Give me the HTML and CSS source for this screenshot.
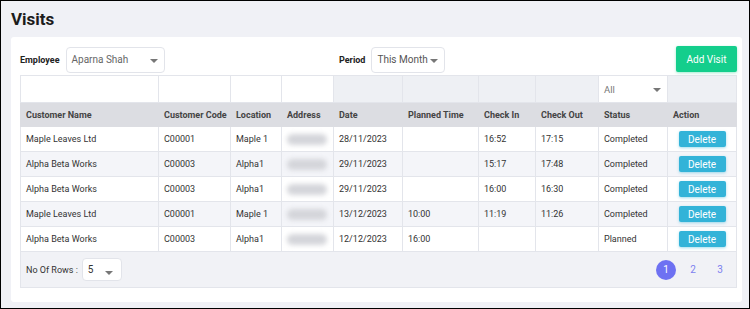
FILE: index.html
```html
<!DOCTYPE html>
<html lang="en">
<head>
    <meta charset="UTF-8">
    <meta name="viewport" content="width=device-width, initial-scale=1.0">
    <title>Visits</title>
    <link rel="stylesheet" href="styles.css">
</head>
<body>
    <div class="page">
        <h1 class="title">Visits</h1>
        <div class="card">
            <div class="toolbar">
                <div class="field">
                    <label>Employee</label>
                    <div class="select emp">Aparna Shah<span class="caret"></span></div>
                </div>
                <div class="field">
                    <label>Period</label>
                    <div class="select period">This Month<span class="caret"></span></div>
                </div>
                <button class="btn-add">Add Visit</button>
            </div>

            <table class="visits">
                <colgroup>
                    <col style="width:138px">
                    <col style="width:72px">
                    <col style="width:51px">
                    <col style="width:52px">
                    <col style="width:69px">
                    <col style="width:76px">
                    <col style="width:57px">
                    <col style="width:63px">
                    <col style="width:69px">
                    <col style="width:69px">
                </colgroup>
                <tr class="filters">
                    <td class="blank"></td>
                    <td class="blank"></td>
                    <td class="blank"></td>
                    <td class="blank"></td>
                    <td></td>
                    <td></td>
                    <td></td>
                    <td></td>
                    <td class="blank"><div class="filter-all">All<span class="caret"></span></div></td>
                    <td></td>
                </tr>
                <tr class="head">
                    <th>Customer Name</th>
                    <th>Customer Code</th>
                    <th>Location</th>
                    <th>Address</th>
                    <th>Date</th>
                    <th>Planned Time</th>
                    <th>Check In</th>
                    <th>Check Out</th>
                    <th>Status</th>
                    <th>Action</th>
                </tr>
                <tr class="row">
                    <td>Maple Leaves Ltd</td>
                    <td>C00001</td>
                    <td>Maple 1</td>
                    <td><span class="blur"></span></td>
                    <td>28/11/2023</td>
                    <td></td>
                    <td>16:52</td>
                    <td>17:15</td>
                    <td>Completed</td>
                    <td class="act"><button class="btn-del">Delete</button></td>
                </tr>
                <tr class="row alt">
                    <td>Alpha Beta Works</td>
                    <td>C00003</td>
                    <td>Alpha1</td>
                    <td><span class="blur"></span></td>
                    <td>29/11/2023</td>
                    <td></td>
                    <td>15:17</td>
                    <td>17:48</td>
                    <td>Completed</td>
                    <td class="act"><button class="btn-del">Delete</button></td>
                </tr>
                <tr class="row">
                    <td>Alpha Beta Works</td>
                    <td>C00003</td>
                    <td>Alpha1</td>
                    <td><span class="blur"></span></td>
                    <td>29/11/2023</td>
                    <td></td>
                    <td>16:00</td>
                    <td>16:30</td>
                    <td>Completed</td>
                    <td class="act"><button class="btn-del">Delete</button></td>
                </tr>
                <tr class="row alt">
                    <td>Maple Leaves Ltd</td>
                    <td>C00001</td>
                    <td>Maple 1</td>
                    <td><span class="blur"></span></td>
                    <td>13/12/2023</td>
                    <td>10:00</td>
                    <td>11:19</td>
                    <td>11:26</td>
                    <td>Completed</td>
                    <td class="act"><button class="btn-del">Delete</button></td>
                </tr>
                <tr class="row">
                    <td>Alpha Beta Works</td>
                    <td>C00003</td>
                    <td>Alpha1</td>
                    <td><span class="blur"></span></td>
                    <td>12/12/2023</td>
                    <td>16:00</td>
                    <td></td>
                    <td></td>
                    <td>Planned</td>
                    <td class="act"><button class="btn-del">Delete</button></td>
                </tr>
                <tr class="foot">
                    <td colspan="10">
                        <div class="foot-inner">
                            <div class="rows">
                                <span>No Of Rows :</span>
                                <div class="select num">5<span class="caret"></span></div>
                            </div>
                            <div class="pager">
                                <span class="pg on">1</span>
                                <span class="pg">2</span>
                                <span class="pg">3</span>
                            </div>
                        </div>
                    </td>
                </tr>
            </table>
        </div>
    </div>
</body>
</html>
```

FILE: styles.css
```css
* {
    margin: 0;
    box-sizing: border-box;
}

html, body {
    height: 100%;
}

body {
    background-color: #f0f1f6;
    border: 1px solid #000;
    font-family: Roboto, "Liberation Sans", Arial, sans-serif;
    color: #333;
    overflow: hidden;
}

.page {
    padding: 0 7px 0 10px;
}

.title {
    font-size: 17px;
    font-weight: 700;
    color: #1c1c1c;
    height: 36px;
    padding-top: 8px;
    line-height: 20px;
}

.card {
    background-color: #fff;
    border-radius: 3px;
    padding: 8px 5px 14px 9px;
}

.toolbar {
    display: grid;
    grid-template-columns: 319px 1fr auto;
    align-items: center;
    height: 27px;
    margin-bottom: 3px;
}

.field {
    display: flex;
    align-items: center;
    padding-top: 2px;
}

.field label {
    font-size: 9px;
    font-weight: 700;
    color: #222;
    margin-right: 6px;
}

.select {
    position: relative;
    height: 26px;
    border: 1px solid #e2e4ea;
    border-radius: 4px;
    background-color: #fff;
    font-size: 10px;
    color: #666;
    line-height: 24px;
    padding-left: 5px;
}

.emp {
    width: 99px;
}

.period {
    width: 74px;
    color: #555;
}

.caret {
    position: absolute;
    right: 6px;
    top: 11px;
    border-left: 4px solid transparent;
    border-right: 4px solid transparent;
    border-top: 4px solid #777;
}

.btn-add {
    width: 61px;
    height: 26px;
    border: none;
    border-radius: 2px;
    background-color: #14ce8c;
    color: #fff;
    font-family: inherit;
    font-size: 10px;
    box-shadow: 0 1px 3px rgba(20, 206, 140, 0.4);
}

.visits {
    width: 716px;
    border-collapse: collapse;
    table-layout: fixed;
    font-size: 9px;
}

.visits td, .visits th {
    border: 1px solid #e3e5eb;
    padding: 0 5px;
    text-align: left;
    white-space: nowrap;
    overflow: hidden;
}

.filters td {
    height: 27px;
    background-color: #eef0f4;
}

.filters td.blank {
    background-color: #fff;
}

.filter-all {
    position: relative;
    height: 25px;
    line-height: 25px;
    font-size: 9.5px;
    color: #777;
}

.filter-all .caret {
    right: 1px;
    top: 11px;
}

.head th {
    height: 24px;
    background-color: #dcdde2;
    font-weight: 700;
    color: #444;
    border-color: #dcdde2;
}

.row td {
    height: 25px;
    background-color: #fff;
}

.row.alt td {
    background-color: #f4f5f9;
}

.blur {
    display: block;
    width: 40px;
    height: 11px;
    border-radius: 6px;
    background-color: #d4d5da;
    filter: blur(2.5px);
}

.visits .act {
    text-align: center;
}

.btn-del {
    width: 47px;
    height: 16px;
    border: none;
    border-radius: 2px;
    background-color: #33b3d8;
    color: #fff;
    font-family: inherit;
    font-size: 10px;
    box-shadow: 0 1px 3px rgba(51, 179, 216, 0.45);
}

.visits .foot td {
    height: 36px;
    background-color: #f1f2f6;
    padding: 0 6px 0 5px;
}

.foot-inner {
    display: flex;
    justify-content: space-between;
    align-items: center;
}

.rows {
    display: flex;
    align-items: center;
    font-size: 9px;
    color: #333;
}

.num {
    width: 40px;
    height: 23px;
    line-height: 21px;
    margin-left: 4px;
    color: #333;
    font-size: 10px;
}

.num .caret {
    top: 12px;
    right: 8px;
}

.pager {
    display: flex;
    align-items: center;
    gap: 7px;
}

.pg {
    width: 20px;
    height: 20px;
    border-radius: 50%;
    display: flex;
    align-items: center;
    justify-content: center;
    font-size: 10px;
    color: #7b7ff0;
}

.pg.on {
    background-color: #6e71f2;
    color: #fff;
}
```
